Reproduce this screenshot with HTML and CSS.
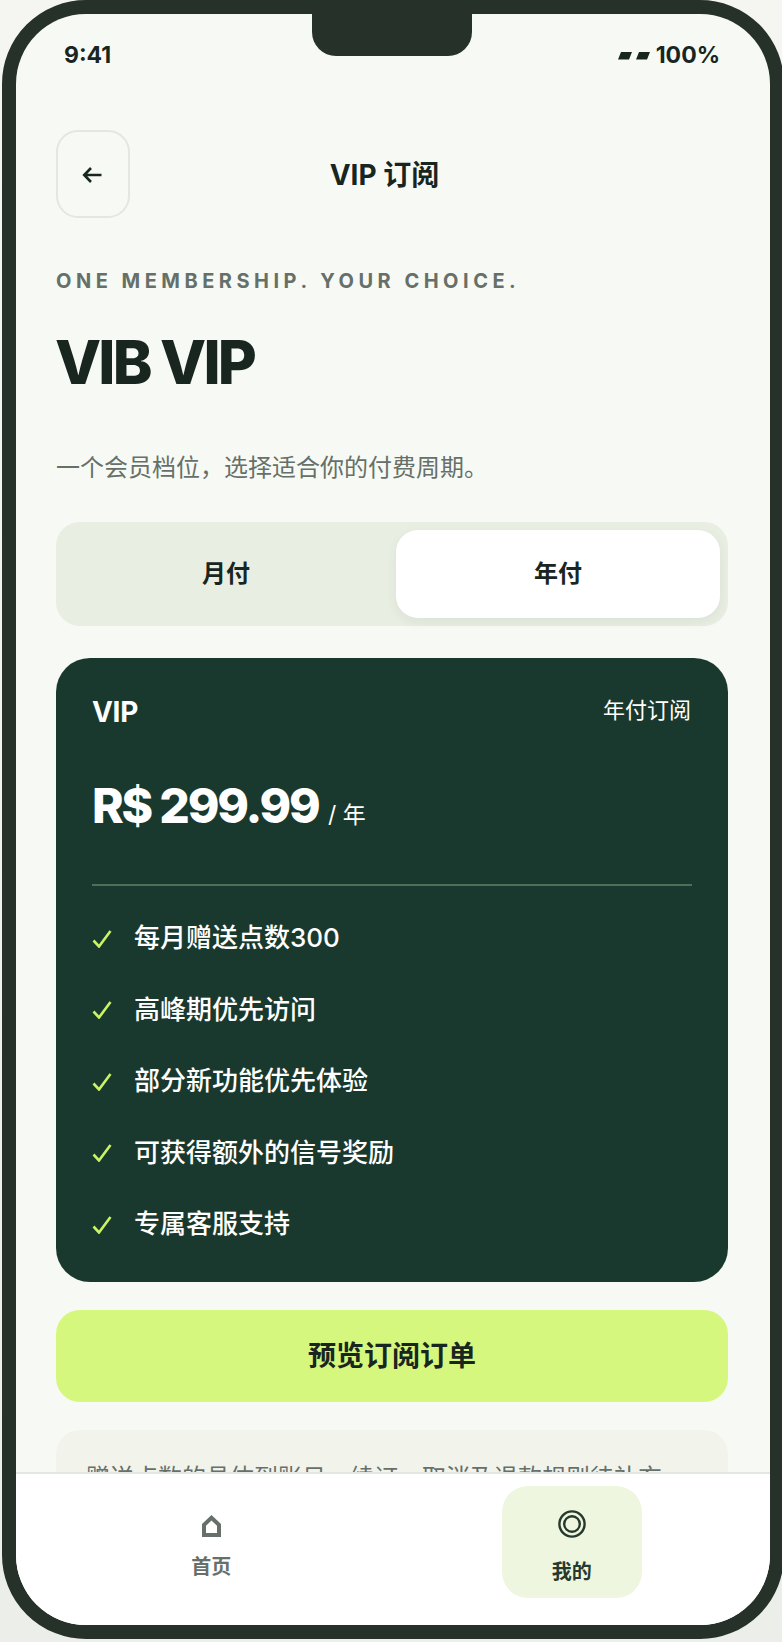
FILE: index.html
```html
<!DOCTYPE html>
<html lang="zh-CN">
<head>
    <meta charset="UTF-8">
    <meta name="viewport" content="width=device-width, initial-scale=1.0">
    <title>VIP 订阅</title>
    <link rel="stylesheet" href="styles.css">
</head>
<body>
    <div class="phone">
        <div class="screen">
            <div class="notch"></div>
            <div class="status-bar">
                <span>9:41</span>
                <span class="status-right">
                    <svg width="32" height="8" viewBox="0 0 32 8" fill="#18261f">
                        <path d="M3 0h11l-3 7.5H0zM21 0h11l-3 7.5H18z"/>
                    </svg>
                    100%
                </span>
            </div>

            <div class="content">
                <div class="top-bar">
                    <button class="back-btn" type="button" aria-label="返回">
                        <svg width="20" height="16" viewBox="0 0 20 16" fill="none" stroke="#18261f" stroke-width="2.6">
                            <path d="M19.5 8H2.5M9 1L2.2 8 9 15"/>
                        </svg>
                    </button>
                    <div class="top-title">VIP 订阅</div>
                    <div class="top-spacer"></div>
                </div>

                <div class="eyebrow">ONE MEMBERSHIP. YOUR CHOICE.</div>
                <h1>VIB VIP</h1>
                <p class="sub">一个会员档位，选择适合你的付费周期。</p>

                <div class="toggle">
                    <div class="toggle-item">月付</div>
                    <div class="toggle-item active">年付</div>
                </div>

                <div class="plan-card">
                    <div class="plan-head">
                        <span class="plan-name">VIP</span>
                        <span class="plan-cycle">年付订阅</span>
                    </div>
                    <div class="plan-price">
                        <span class="amount">R$ 299.99</span>
                        <span class="per">/ 年</span>
                    </div>
                    <ul class="features">
                        <li><svg class="check" viewBox="0 0 20 18"><path d="M1.5 10.5l5.5 6L18.5 1"/></svg>每月赠送点数300</li>
                        <li><svg class="check" viewBox="0 0 20 18"><path d="M1.5 10.5l5.5 6L18.5 1"/></svg>高峰期优先访问</li>
                        <li><svg class="check" viewBox="0 0 20 18"><path d="M1.5 10.5l5.5 6L18.5 1"/></svg>部分新功能优先体验</li>
                        <li><svg class="check" viewBox="0 0 20 18"><path d="M1.5 10.5l5.5 6L18.5 1"/></svg>可获得额外的信号奖励</li>
                        <li><svg class="check" viewBox="0 0 20 18"><path d="M1.5 10.5l5.5 6L18.5 1"/></svg>专属客服支持</li>
                    </ul>
                </div>

                <button class="cta" type="button">预览订阅订单</button>

                <div class="note">赠送点数的具体到账日，续订，取消及退款规则待补充。</div>
            </div>

            <nav class="tab-bar">
                <div class="tab">
                    <svg class="tab-icon" width="19" height="22" viewBox="0 0 19 22">
                        <path fill="#667069" fill-rule="evenodd" d="M9.5 0L19 9v13H0V9zM9.5 5.5L4 10.8V18h11v-7.2z"/>
                    </svg>
                    <span>首页</span>
                </div>
                <div class="tab active">
                    <svg class="tab-icon" width="28" height="28" viewBox="0 0 28 28" fill="none" stroke="#26392c" stroke-width="2.4">
                        <circle cx="14" cy="14" r="12.6"/>
                        <circle cx="14" cy="14" r="7.8"/>
                    </svg>
                    <span>我的</span>
                </div>
            </nav>
        </div>
    </div>
</body>
</html>
```

FILE: styles.css
```css
* {
    box-sizing: border-box;
}
html, body {
    height: 100%;
}
body {
    margin: 0;
    padding-left: 2px;
    overflow: hidden;
    background: linear-gradient(180deg, #f5f6f2, #eceee9);
    font-family: Inter, "Noto Sans CJK SC", sans-serif;
    color: #18261f;
}
.phone {
    width: 782px;
    height: 1639px;
    border: 14px solid #26312a;
    border-radius: 84px;
    background: #26312a;
}
.screen {
    position: relative;
    display: flex;
    flex-direction: column;
    height: 100%;
    background: #f7faf4;
    border-radius: 70px;
    overflow: hidden;
}
.notch {
    position: absolute;
    top: 0;
    left: 296px;
    width: 160px;
    height: 42px;
    background: #26312a;
    border-radius: 0 0 24px 24px;
}
.status-bar {
    flex: none;
    display: flex;
    justify-content: space-between;
    align-items: center;
    height: 82px;
    padding: 0 50px 0 48px;
    font-size: 23px;
    font-weight: 700;
}
.status-right {
    display: flex;
    align-items: center;
    gap: 6px;
}
.status-right svg {
    margin-top: 2px;
}
.content {
    flex: 1;
    min-height: 0;
    overflow: hidden;
    padding: 34px 42px 0 40px;
}
.top-bar {
    display: flex;
    align-items: center;
    height: 88px;
}
.back-btn {
    display: flex;
    align-items: center;
    justify-content: center;
    width: 74px;
    height: 88px;
    padding: 2px 2px 0 0;
    border: 2px solid #e2e7e1;
    border-radius: 22px;
    background: transparent;
}
.top-title {
    flex: 1;
    padding-bottom: 2px;
    text-align: center;
    font-size: 28px;
    font-weight: 700;
}
.top-spacer {
    width: 89px;
}
.eyebrow {
    margin-top: 51px;
    font-size: 20px;
    line-height: 24px;
    font-weight: 700;
    letter-spacing: 4.5px;
    color: #667069;
}
h1 {
    margin: 33px 0 0 -1px;
    font-size: 60px;
    line-height: 72px;
    font-weight: 800;
    letter-spacing: -2.8px;
    color: #18261f;
}
.sub {
    margin: 52px 0 0;
    font-size: 24px;
    line-height: 36px;
    color: #667069;
}
.toggle {
    display: grid;
    grid-template-columns: 1fr 1fr;
    gap: 8px;
    height: 104px;
    margin-top: 36px;
    padding: 8px;
    background: #e8eee2;
    border-radius: 24px;
}
.toggle-item {
    display: flex;
    align-items: center;
    justify-content: center;
    padding-bottom: 6px;
    font-size: 24px;
    font-weight: 700;
    border-radius: 22px;
}
.toggle-item.active {
    background: #fff;
    box-shadow: 0 4px 12px rgba(24, 38, 31, 0.06);
}
.plan-card {
    height: 624px;
    margin-top: 32px;
    padding: 36px 36px 0;
    background: #1a392e;
    border-radius: 34px;
    color: #fff;
}
.plan-head {
    display: flex;
    justify-content: space-between;
    align-items: center;
    height: 36px;
}
.plan-name {
    font-size: 28px;
    font-weight: 700;
    letter-spacing: -0.3px;
}
.plan-cycle {
    margin-right: 1px;
    padding-bottom: 8px;
    font-size: 22px;
}
.plan-price {
    margin-top: 40px;
    padding-bottom: 31px;
    border-bottom: 2px solid #4f7058;
    line-height: 72px;
}
.amount {
    font-size: 48px;
    font-weight: 800;
    letter-spacing: -2.2px;
}
.per {
    margin-left: 5px;
    font-size: 23px;
}
.features {
    list-style: none;
    margin: 14px 0 0;
    padding: 0;
}
.features li {
    display: flex;
    align-items: center;
    height: 71.5px;
    font-size: 26px;
    font-weight: 500;
}
.check {
    width: 20px;
    height: 18px;
    margin: 6px 22px 0 0;
    fill: none;
    stroke: #c9f464;
    stroke-width: 2.6;
}
.cta {
    display: block;
    width: 100%;
    height: 92px;
    margin-top: 28px;
    padding-bottom: 5px;
    border: none;
    border-radius: 24px;
    background: #d6f77d;
    font-family: inherit;
    font-size: 28px;
    font-weight: 700;
    color: #18261f;
}
.note {
    height: 120px;
    margin-top: 28px;
    padding: 30px;
    background: #f2f4ec;
    border-radius: 24px;
    font-size: 24px;
    line-height: 36px;
    color: #667069;
}
.tab-bar {
    flex: none;
    display: grid;
    grid-template-columns: 1fr 1fr;
    height: 153px;
    padding: 12px 18px 0 15px;
    background: #fff;
    border-top: 2px solid #e2e7e1;
}
.tab {
    display: flex;
    flex-direction: column;
    align-items: center;
    justify-content: center;
    gap: 14px;
    width: 140px;
    height: 112px;
    padding-top: 10px;
    justify-self: center;
    font-size: 20px;
    font-weight: 700;
    color: #667069;
}
.tab.active {
    gap: 18px;
    background: #eef6e0;
    border-radius: 26px;
    color: #26392c;
}
```
